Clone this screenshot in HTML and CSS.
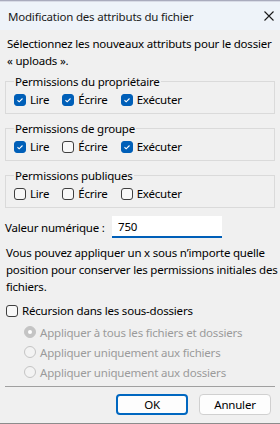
FILE: index.html
```html
<!DOCTYPE html>
<html lang="fr">
<head>
    <meta charset="UTF-8">
    <title>Modification des attributs du fichier</title>
    <link rel="stylesheet" href="styles.css">
</head>
<body>
    <div class="dialog">
        <!-- barre de titre -->
        <div class="titlebar">
            <span class="title">Modification des attributs du fichier</span>
            <svg class="close" width="10" height="10" viewBox="0 0 10 10">
                <path d="M0.5 0.5 L9.5 9.5 M9.5 0.5 L0.5 9.5" stroke="#1a1a1a" stroke-width="1.1" fill="none"/>
            </svg>
        </div>

        <div class="body">
            <p class="intro">Sélectionnez les nouveaux attributs pour le dossier<br>« uploads ».</p>

            <fieldset class="group">
                <legend>Permissions du propriétaire</legend>
                <div class="checks">
                    <label class="check"><span class="box checked"><svg viewBox="0 0 12 12"><path d="M3 6.3 L5 8.2 L9 4.2"/></svg></span>Lire</label>
                    <label class="check"><span class="box checked"><svg viewBox="0 0 12 12"><path d="M3 6.3 L5 8.2 L9 4.2"/></svg></span>Écrire</label>
                    <label class="check"><span class="box checked"><svg viewBox="0 0 12 12"><path d="M3 6.3 L5 8.2 L9 4.2"/></svg></span>Exécuter</label>
                </div>
            </fieldset>

            <fieldset class="group">
                <legend>Permissions de groupe</legend>
                <div class="checks">
                    <label class="check"><span class="box checked"><svg viewBox="0 0 12 12"><path d="M3 6.3 L5 8.2 L9 4.2"/></svg></span>Lire</label>
                    <label class="check"><span class="box"></span>Écrire</label>
                    <label class="check"><span class="box checked"><svg viewBox="0 0 12 12"><path d="M3 6.3 L5 8.2 L9 4.2"/></svg></span>Exécuter</label>
                </div>
            </fieldset>

            <fieldset class="group">
                <legend>Permissions publiques</legend>
                <div class="checks">
                    <label class="check"><span class="box"></span>Lire</label>
                    <label class="check"><span class="box"></span>Écrire</label>
                    <label class="check"><span class="box"></span>Exécuter</label>
                </div>
            </fieldset>

            <div class="numeric">
                <span class="numeric-label">Valeur numérique :</span>
                <div class="input">750</div>
            </div>

            <p class="hint">Vous pouvez appliquer un x sous n’importe quelle<br>position pour conserver les permissions initiales des<br>fichiers.</p>

            <label class="check recursion"><span class="box"></span>Récursion dans les sous-dossiers</label>

            <div class="radios">
                <div class="radio selected"><span class="circle"></span>Appliquer à tous les fichiers et dossiers</div>
                <div class="radio"><span class="circle"></span>Appliquer uniquement aux fichiers</div>
                <div class="radio"><span class="circle"></span>Appliquer uniquement aux dossiers</div>
            </div>

            <div class="separator"></div>

            <div class="buttons">
                <button class="btn default">OK</button>
                <button class="btn">Annuler</button>
            </div>
        </div>
    </div>
</body>
</html>
```

FILE: styles.css
```css
* {
    margin: 0;
    padding: 0;
    box-sizing: border-box;
}

body {
    font-family: 'Noto Sans', 'Liberation Sans', sans-serif;
    font-size: 11.5px;
    letter-spacing: -0.2px;
    color: #000;
    background: #a9abbd;
}

.dialog {
    width: 280px;
    height: 423px;
    margin-top: 1px;
    background: #f0f0f0;
    border-bottom: 1px solid #8c8c8c;
    overflow: hidden;
}

/* barre de titre */
.titlebar {
    height: 29px;
    background: #eef3f9;
    display: flex;
    align-items: center;
    justify-content: space-between;
    padding: 0 6px 0 8px;
    border-top: 1px solid #d8dbe6;
}

.title {
    color: #1a1a1a;
}

.close {
    display: block;
}

.body {
    padding: 0 5px;
}

.intro {
    line-height: 17px;
    padding-left: 2px;
    margin-top: 5px;
    white-space: nowrap;
}

/* groupes */
.group {
    border: 1px solid #dadada;
    padding: 0 8px 5px;
    margin-top: 5px;
    min-width: 0;
}

.group + .group {
    margin-top: 7px;
}

.group legend {
    line-height: 15px;
    padding: 0 1px;
}

.checks {
    display: flex;
    gap: 13px;
    margin-top: 2px;
}

.check {
    display: flex;
    align-items: center;
    gap: 4px;
    line-height: 17px;
    white-space: nowrap;
}

.box {
    width: 12px;
    height: 12px;
    border: 1px solid #3f3f3f;
    border-radius: 3px;
    background: #f8f8f8;
    display: block;
    flex: none;
}

.box.checked {
    background: #005fb8;
    border-color: #005fb8;
}

.box svg {
    display: block;
    width: 10px;
    height: 10px;
}

.box svg path {
    fill: none;
    stroke: #fff;
    stroke-width: 1.3;
}

/* valeur numérique */
.numeric {
    display: flex;
    align-items: center;
    margin-top: 8px;
}

.numeric-label {
    width: 107px;
    white-space: nowrap;
}

.input {
    width: 110px;
    height: 22px;
    background: #fff;
    border-bottom: 2px solid #005fb8;
    padding: 2px 6px 0;
    line-height: 18px;
}

.hint {
    line-height: 17px;
    padding-left: 1px;
    margin-top: 6px;
    white-space: nowrap;
}

.recursion {
    margin-top: 7px;
    margin-left: 1px;
}

/* options désactivées */
.radios {
    margin-top: 3px;
    padding-left: 19px;
    color: #9b9b9b;
}

.radio {
    display: flex;
    align-items: center;
    gap: 4px;
    height: 20px;
    white-space: nowrap;
}

.circle {
    width: 12px;
    height: 12px;
    border-radius: 50%;
    border: 1px solid #c4c4c4;
    background: #f3f3f3;
    display: block;
    flex: none;
}

.radio.selected .circle {
    background: #c4c4c4;
    position: relative;
}

.radio.selected .circle::after {
    content: '';
    position: absolute;
    top: 3px;
    left: 3px;
    width: 4px;
    height: 4px;
    border-radius: 50%;
    background: #fff;
}

.separator {
    height: 1px;
    background: #a0a0a0;
    margin-top: 4px;
}

.buttons {
    display: flex;
    justify-content: flex-end;
    gap: 11px;
    padding-right: 4px;
    margin-top: 7px;
}

.btn {
    width: 72px;
    height: 21px;
    font-family: inherit;
    font-size: 11.5px;
    letter-spacing: -0.2px;
    background: #fdfdfd;
    border: 1px solid #d0d0d0;
    border-radius: 4px;
    color: #000;
}

.btn.default {
    border: 2px solid #0067c0;
}
```
